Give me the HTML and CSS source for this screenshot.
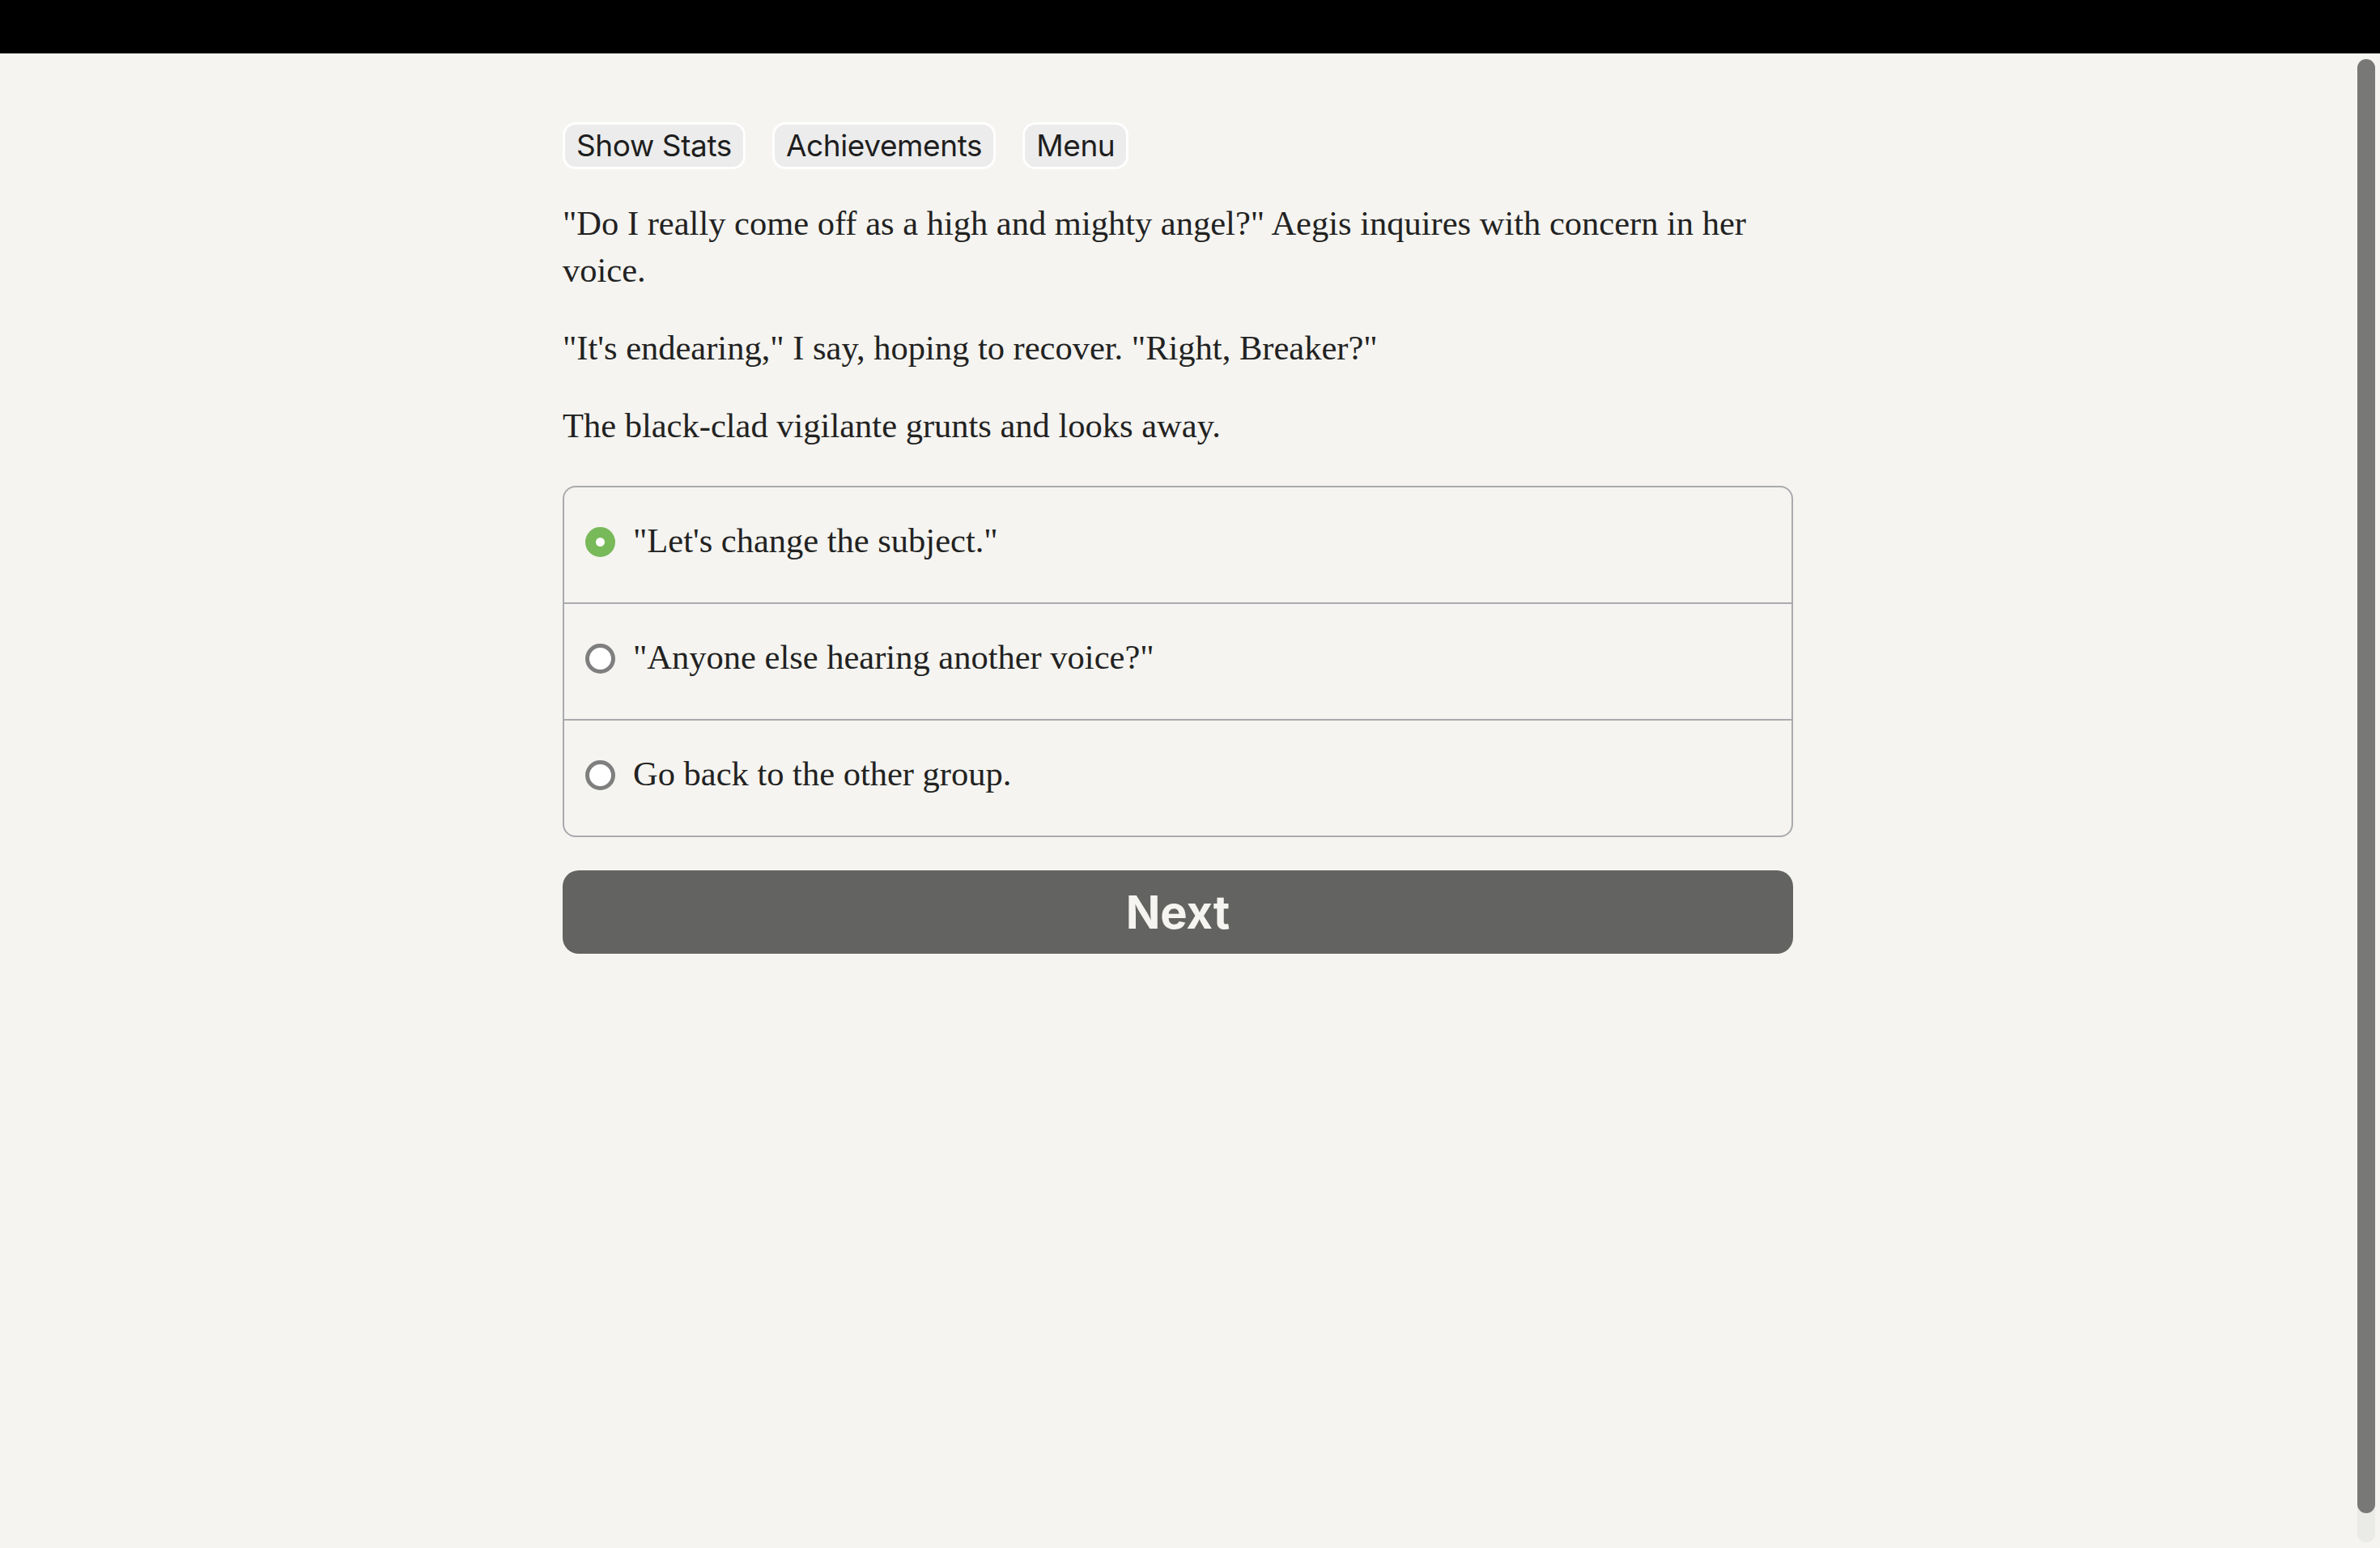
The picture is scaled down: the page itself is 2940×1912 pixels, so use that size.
FILE: index.html
```html
<!DOCTYPE html>
<html lang="en">
<head>
<meta charset="utf-8">
<title>Choice</title>
<link rel="stylesheet" href="styles.css">
</head>
<body>
<div class="topbar"></div>
<div class="viewport">
  <div class="scroller">
    <main class="page">
      <nav class="toolbar">
        <button class="tool-btn" type="button">Show Stats</button>
        <button class="tool-btn" type="button">Achievements</button>
        <button class="tool-btn" type="button">Menu</button>
      </nav>
      <div class="story">
        <p>"Do I really come off as a high and mighty angel?" Aegis inquires with concern in her voice.</p>
        <p>"It's endearing," I say, hoping to recover. "Right, Breaker?"</p>
        <p>The black-clad vigilante grunts and looks away.</p>
      </div>
      <form class="choices">
        <label class="choice">
          <input class="radio" type="radio" name="choice" checked>
          <span class="choice-text">"Let's change the subject."</span>
        </label>
        <label class="choice">
          <input class="radio" type="radio" name="choice">
          <span class="choice-text">"Anyone else hearing another voice?"</span>
        </label>
        <label class="choice">
          <input class="radio" type="radio" name="choice">
          <span class="choice-text">Go back to the other group.</span>
        </label>
      </form>
      <button class="next" type="button">Next</button>
    </main>
  </div>
  <div class="scrollbar">
    <div class="track">
      <div class="thumb"></div>
    </div>
  </div>
</div>
</body>
</html>
```
FILE: styles.css
```css
html, body {
  margin: 0;
  padding: 0;
  height: 100%;
  overflow: hidden;
  background: #f5f4f0;
}

body {
  display: flex;
  flex-direction: column;
  font-family: "Liberation Serif", "Times New Roman", serif;
  color: #222222;
}

.topbar {
  flex: 0 0 66px;
  background: #000000;
}

.viewport {
  flex: 1 1 auto;
  display: flex;
  min-height: 0;
}

.scroller {
  flex: 1 1 auto;
  overflow: hidden;
  background: #f5f4f0;
}

.scrollbar {
  flex: 0 0 30px;
  box-sizing: border-box;
  padding: 7px 6px 7px 2px;
  display: flex;
}

.track {
  flex: 1 1 auto;
  border-radius: 11px;
  background: #eaeae7;
  display: flex;
  flex-direction: column;
}

.thumb {
  height: 1796px;
  border-radius: 11px;
  background: #787876;
}

.page {
  box-sizing: border-box;
  width: 1520px;
  margin: 0 auto;
  padding-top: 85px;
  display: flex;
  flex-direction: column;
}

.toolbar {
  display: flex;
  gap: 33px;
  margin-bottom: 38px;
}

.tool-btn {
  box-sizing: border-box;
  height: 58px;
  padding: 0 14px;
  border: 3px solid #ffffff;
  border-radius: 16px;
  background: #ececec;
  color: #1e1e1e;
  font-family: Inter, "Liberation Sans", sans-serif;
  font-size: 37px;
  line-height: 52px;
  letter-spacing: -0.4px;
}

.story p {
  margin: 0 0 38px 0;
  font-size: 42.5px;
  line-height: 58px;
}

.story p:last-child {
  margin-bottom: 0;
}

.choices {
  margin: 45px 0 0 0;
  border: 2px solid #a9aaad;
  border-radius: 16px;
  display: flex;
  flex-direction: column;
}

.choice {
  display: flex;
  align-items: flex-start;
  gap: 22px;
  padding: 37px 26px 47px 26px;
  font-size: 42.5px;
  line-height: 58px;
}

.choice + .choice {
  border-top: 2px solid #a9aaad;
}

.radio {
  appearance: none;
  -webkit-appearance: none;
  box-sizing: border-box;
  flex: 0 0 37px;
  width: 37px;
  height: 37px;
  margin: 12px 0 0 0;
  border-radius: 50%;
  border: 5px solid #7f7f7f;
  background: #ffffff;
}

.radio:checked {
  border: 13px solid #78b95a;
}

.next {
  margin-top: 41px;
  height: 103px;
  border: none;
  border-radius: 20px;
  background: #636361;
  color: #f5f4f0;
  font-family: Inter, "Liberation Sans", sans-serif;
  font-weight: 700;
  font-size: 56px;
}
```
